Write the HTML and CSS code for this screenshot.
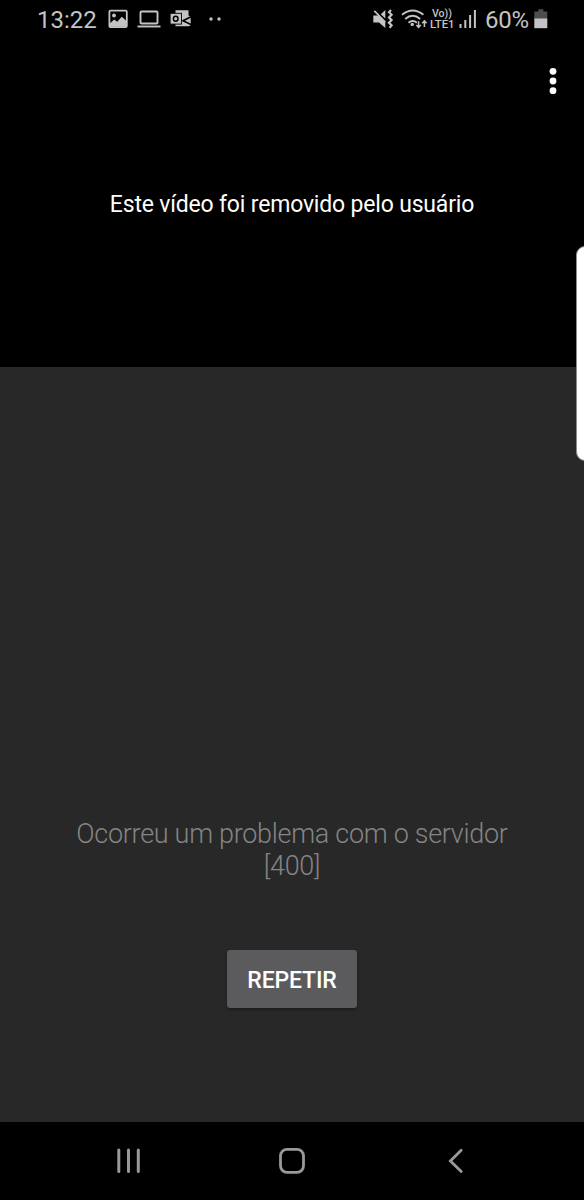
FILE: index.html
```html
<!DOCTYPE html>
<html lang="pt-BR">
<head>
    <meta charset="UTF-8">
    <meta name="viewport" content="width=device-width, initial-scale=1.0">
    <title>Vídeo</title>
    <link rel="stylesheet" href="styles.css">
</head>
<body>
    <div class="screen">
        <div class="player">
            <div class="status-bar">
                <div class="status-left">
                    <span class="clock">13:22</span>
                    <svg class="icon-image" width="20" height="20" viewBox="0 0 20 20">
                        <rect x="1.4" y="1.6" width="17.4" height="16.6" rx="1.2" fill="none" stroke="currentColor" stroke-width="1.8" />
                        <circle cx="6" cy="6.5" r="1.9" fill="currentColor" />
                        <path d="M2 14.2l4.2-3.7 3 2.2 4.6-4.9 4.5 4v6H2z" fill="currentColor" />
                    </svg>
                    <svg class="icon-laptop" width="24" height="20" viewBox="0 0 24 20">
                        <rect x="3.5" y="2.5" width="17" height="12" rx="1" fill="none" stroke="currentColor" stroke-width="1.9" />
                        <path d="M.5 17.5h23" stroke="currentColor" stroke-width="1.9" />
                    </svg>
                    <svg class="icon-outlook" width="22" height="20" viewBox="0 0 22 20">
                        <path d="M5.5 1.2h13v5.3l2.2 1v9l-2.2.8h-13z" fill="currentColor" />
                        <path d="M21.5 7.4L13 11.7l8.500 4" fill="none" stroke="#000" stroke-width="1.7" />
                        <rect x=".1" y="4.3" width="11.4" height="10.8" fill="currentColor" stroke="#000" stroke-width=".9" />
                        <ellipse cx="5.7" cy="9.7" rx="2.3" ry="2.5" fill="none" stroke="#000" stroke-width="1.5" />
                    </svg>
                    <svg class="icon-more" width="12" height="20" viewBox="0 0 12 20" fill="currentColor">
                        <circle cx="2" cy="10" r="1.7" />
                        <circle cx="10" cy="10" r="1.7" />
                    </svg>
                </div>
                <div class="status-right">
                    <svg class="icon-mute" width="21" height="20" viewBox="0 0 21 20" fill="none" stroke="currentColor">
                        <path d="M.3 6.5h5L12.3 13v6L6 13.5H.3z" fill="currentColor" stroke="none" />
                        <path d="M7.8 5.2L12.3 1v8.600z" fill="currentColor" stroke="none" />
                        <path d="M1.3 1.8l11 11.2" stroke-width="1.7" />
                        <path d="M18 1l-2 2.2 2.6 2.6L16 8.5l2.6 2.6-2.6 2.7 2.6 2.6-2 2.3" stroke-width="2.2" />
                    </svg>
                    <svg class="icon-wifi" width="27" height="20" viewBox="0 0 27 20" fill="none" stroke="currentColor">
                        <path d="M1 5.8q10.7-8.800 21.400 0M4.2 10q7.500-6.300 15 0M7.5 13.700q4.200-3.400 8.400 0" stroke-width="1.9" />
                        <circle cx="11.2" cy="15.4" r="1.7" fill="currentColor" stroke="none" />
                        <path d="M17.6 12.2v6M15.400 16.100l2.200 2.300 2.200-2.300M23.400 18v-6M21.200 14.200l2.200-2.300 2.200 2.300" stroke-width="1.5" />
                    </svg>
                    <svg class="icon-volte" width="26" height="22" viewBox="0 0 26 22" fill="currentColor">
                        <text x="3" y="9.2" textLength="20" lengthAdjust="spacingAndGlyphs">Vo))</text>
                        <text x="1" y="20" textLength="24.5" lengthAdjust="spacingAndGlyphs">LTE1</text>
                    </svg>
                    <svg class="icon-signal" width="18" height="20" viewBox="0 0 18 20" fill="currentColor">
                        <rect x=".5" y="15" width="2" height="4" />
                        <rect x="5.3" y="11" width="2" height="8" />
                        <rect x="10.1" y="6" width="2" height="13" />
                        <rect x="14.9" y="1" width="2" height="18" />
                    </svg>
                    <span class="percent">60%</span>
                    <svg class="icon-battery" width="14" height="20" viewBox="0 0 14 20">
                        <path d="M.3 2.5h4V.3h5v2.2h4V10H.3z" fill="#4d4d4d" />
                        <path d="M.3 9.5h13v9.7H.3z" fill="currentColor" />
                    </svg>
                </div>
            </div>
            <button class="menu-button" aria-label="Mais opções">
                <svg width="8" height="28" viewBox="0 0 8 28" fill="currentColor">
                    <circle cx="4" cy="4.3" r="3.4" />
                    <circle cx="4" cy="14" r="3.4" />
                    <circle cx="4" cy="23.7" r="3.4" />
                </svg>
            </button>
            <p class="video-message">Este vídeo foi removido pelo usuário</p>
        </div>

        <div class="content">
            <p class="error-message">Ocorreu um problema com o servidor [400]</p>
            <button class="retry-button">REPETIR</button>
        </div>

        <div class="nav-bar">
            <svg width="28" height="28" viewBox="0 0 28 28" fill="none" stroke="currentColor" stroke-width="3" stroke-linecap="round">
                <path d="M4.8 3v21.500M14.5 3v21.500M24.3 3v21.500" />
            </svg>
            <svg width="28" height="28" viewBox="0 0 28 28" fill="none" stroke="currentColor" stroke-width="2.8">
                <rect x="2.5" y="2.3" width="23" height="23" rx="6.5" />
            </svg>
            <svg width="28" height="28" viewBox="0 0 28 28" fill="none" stroke="currentColor" stroke-width="2.8" stroke-linecap="round">
                <path d="M19.2 3.300L8.400 13.900l10.800 10.600" />
            </svg>
        </div>

        <!-- edge panel handle, floats over the app -->
        <div class="edge-panel"></div>
    </div>
</body>
</html>
```

FILE: styles.css
```css
:root {
    --status-color: #c4c4c4;
    --content-background: #282828;
    --nav-color: #999;
}

* {
    margin: 0;
    padding: 0;
    box-sizing: border-box;
}

body {
    font-family: Roboto, sans-serif;
    background-color: #000;
    color: #fff;
}

svg {
    display: block;
    flex-shrink: 0;
}

button {
    font-family: inherit;
    border: none;
    cursor: pointer;
}

.screen {
    position: relative;
    display: flex;
    flex-direction: column;
    width: 584px;
    height: 1200px;
    overflow: hidden;
}

.player {
    display: flex;
    flex-direction: column;
    height: 367px;
    background-color: #000;
}

.status-bar {
    display: flex;
    justify-content: space-between;
    height: 38px;
    padding: 0 36px 0 37px;
    color: var(--status-color);
}

.status-left,
.status-right {
    display: flex;
    align-items: center;
}

.clock,
.percent {
    font-size: 24px;
    line-height: 38px;
    padding-top: 1px;
}

.percent {
    margin-left: 8px;
    letter-spacing: -0.2px;
}

.icon-image {
    margin-left: 11px;
}

.icon-laptop {
    margin-left: 9px;
}

.icon-outlook {
    margin-left: 9px;
}

.icon-more {
    margin-left: 17px;
}

.icon-wifi {
    margin-left: 7px;
}

.icon-volte {
    margin-left: 1px;
    font-size: 10px;
    font-weight: 500;
}

.icon-signal {
    margin-left: 4px;
}

.icon-battery {
    margin-left: 5px;
}

.menu-button {
    align-self: flex-end;
    margin: 29px 27px 0 0;
    background: none;
    color: #fff;
}

.video-message {
    margin-top: 96px;
    font-size: 23px;
    line-height: 28px;
    letter-spacing: -0.18px;
    text-align: center;
}

.content {
    display: flex;
    flex-direction: column;
    align-items: center;
    height: 755px;
    padding-top: 451px;
    background-color: var(--content-background);
}

.error-message {
    width: 464px;
    font-size: 27px;
    font-weight: 300;
    line-height: 32px;
    letter-spacing: -0.3px;
    text-align: center;
    color: #848484;
}

.retry-button {
    width: 130px;
    height: 58px;
    margin-top: 68px;
    padding-top: 2px;
    border-radius: 3px;
    background-color: #5b5b5d;
    box-shadow: 0 2px 3px rgba(0, 0, 0, 0.3);
    color: #fff;
    font-size: 23px;
    font-weight: 500;
    letter-spacing: -0.15px;
}

.nav-bar {
    display: flex;
    justify-content: space-between;
    align-items: center;
    height: 78px;
    padding: 0 114px 1px;
    background-color: #000;
    color: var(--nav-color);
}

.edge-panel {
    position: absolute;
    top: 246px;
    right: -10px;
    width: 18px;
    height: 215px;
    border: 1px solid #8c8c8c;
    border-radius: 9px;
    background-color: #fff;
}
```
